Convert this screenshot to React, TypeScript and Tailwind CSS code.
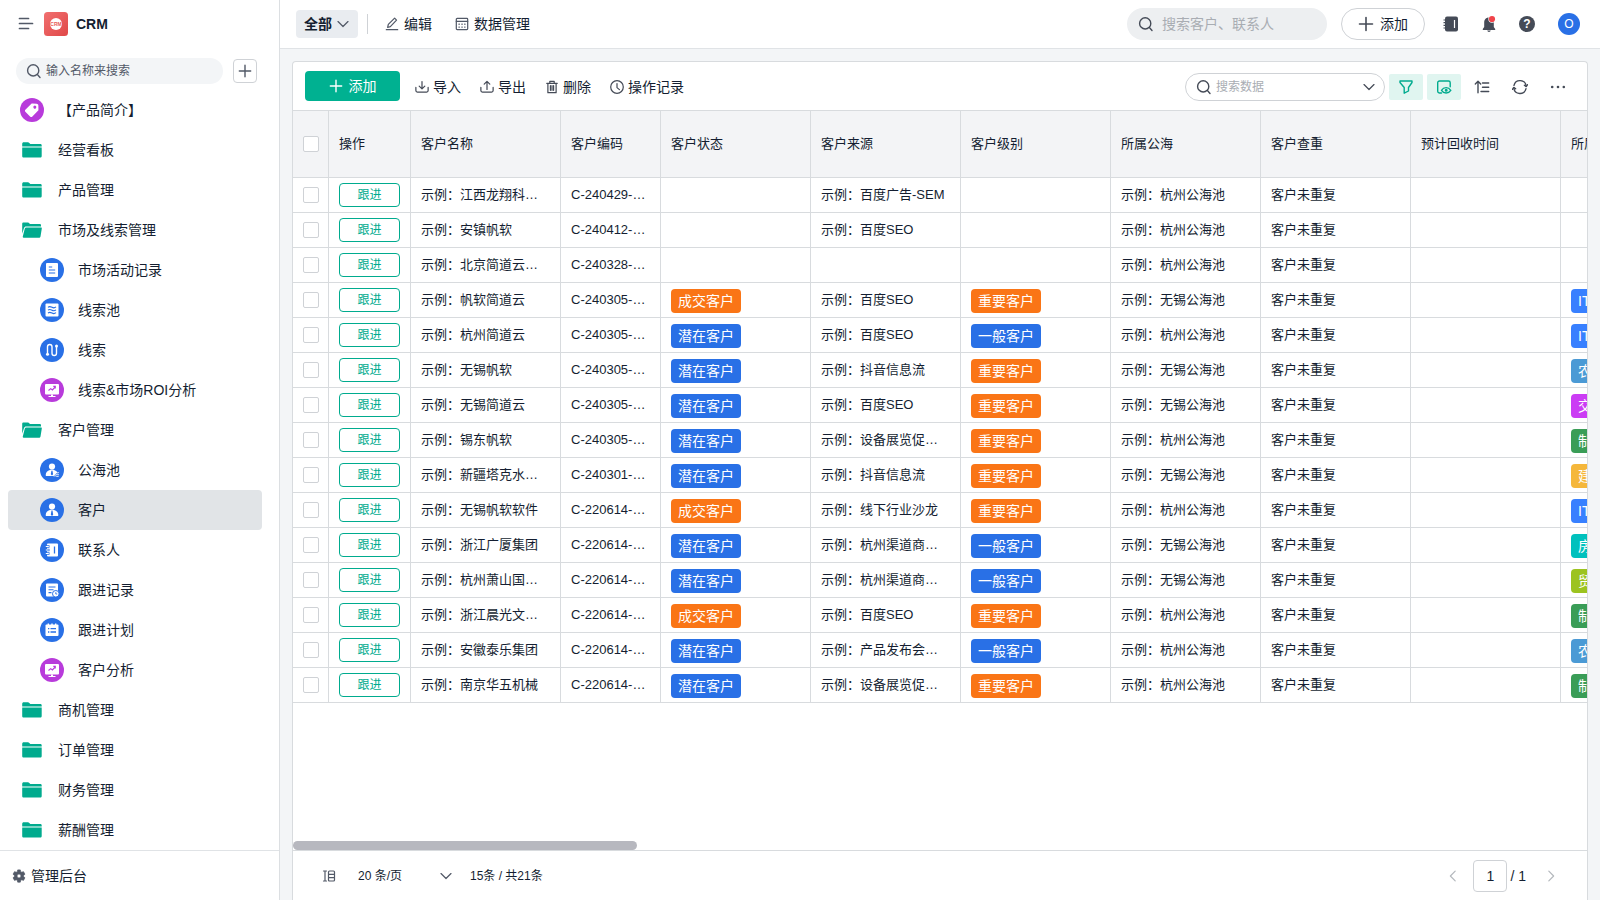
import React, { useState } from "react";

type IconProps = { className?: string; children: React.ReactNode };

const LineIcon: React.FC<IconProps> = ({ className = "size-4", children }) => (
  <svg
    viewBox="0 0 16 16"
    fill="none"
    stroke="currentColor"
    strokeWidth="1.4"
    strokeLinecap="round"
    strokeLinejoin="round"
    aria-hidden="true"
    className={`shrink-0 ${className}`}
  >
    {children}
  </svg>
);

const SearchIcon = ({ className }: { className?: string }) => (
  <LineIcon className={className}>
    <circle cx="7.2" cy="7.4" r="5.6" />
    <path d="M11.4 11.6l2.6 2.8" />
  </LineIcon>
);

const PlusIcon = ({ className }: { className?: string }) => (
  <LineIcon className={className}>
    <path d="M8 1.5v13M1.5 8h13" strokeWidth="1.6" />
  </LineIcon>
);

const ChevronDown = ({ className }: { className?: string }) => (
  <LineIcon className={className}>
    <path d="M2.3 5.2L8 10.9l5.7-5.7" />
  </LineIcon>
);

const FolderIcon = () => (
  <svg viewBox="0 0 24 24" fill="#00ab8e" className="size-6 shrink-0" aria-hidden="true">
    <path d="M2.2 5.9c0-1 .6-1.6 1.5-1.6h4.2c.6 0 1 .2 1.4.6l1 1h9.8c.9 0 1.6.5 1.6 1.4v1.1H2.200z" />
    <path d="M2.2 9.6h19.500v8.400c0 1-.6 1.600-1.600 1.600H3.800c-1 0-1.600-.6-1.600-1.600z" />
  </svg>
);

const FolderOpenIcon = () => (
  <svg viewBox="0 0 24 24" fill="#00ab8e" className="size-6 shrink-0" aria-hidden="true">
    <path d="M2.2 15.8V6c0-.9.500-1.400 1.400-1.400H8c.5 0 .9.200 1.200.6l.8.9h9.600c.9 0 1.400.5 1.400 1.300v1H6.100c-1 0-1.800.6-2.100 1.500z" />
    <path d="M6.200 9.400h14.700c.7 0 1.100.4.9 1.100l-1.300 7.900c-.2.900-.7 1.300-1.600 1.300H3.600c-.7 0-1-.4-.8-1.100l2-8c.2-.8.700-1.200 1.400-1.200z" />
  </svg>
);

const glyphs: Record<string, React.ReactNode> = {
  tag: (
    <g transform="rotate(45 12 12)">
      <path
        d="M12 3.8c.5 0 .9.2 1.3.5l3 2.9c.4.4.5.7.5 1.2v8.2c0 .8-.5 1.3-1.3 1.3h-7c-.8 0-1.3-.5-1.3-1.3V8.4c0-.5.1-.8.5-1.2l3-2.9c.4-.3.8-.5 1.3-.5z"
        fill="#fff"
      />
      <circle cx="12" cy="8" r="1.500" fill="#b83bdb" />
    </g>
  ),
  doc: (
    <>
      <rect x="6" y="5" width="12" height="14" rx="1" fill="#fff" />
      <path d="M8.8 9h3.4M8.8 12h6.4M8.8 15h6.4" stroke="#2970e6" strokeWidth="1.2" />
    </>
  ),
  pool: (
    <>
      <rect x="5.500" y="5.500" width="13" height="13" rx="1" fill="#fff" />
      <path
        d="M8 9.3c1.5-1.4 2.6-.8 4 0s2.500 1 4-.4M8 12.200c1.500-1.400 2.600-.8 4 0s2.500 1 4-.4M8 15.100c1.500-1.400 2.600-.8 4 0s2.500 1 4-.4"
        fill="none"
        stroke="#2970e6"
        strokeWidth="1.1"
      />
    </>
  ),
  clue: (
    <>
      <path
        d="M7.500 15.500V8.700a2.250 2.250 0 0 1 4.500 0v6.600a2.250 2.250 0 0 0 4.500 0V8.500"
        fill="none"
        stroke="#fff"
        strokeWidth="1.4"
      />
      <circle cx="7.500" cy="16.300" r="1.500" fill="#fff" />
      <circle cx="16.500" cy="8" r="1.500" fill="#fff" />
    </>
  ),
  chart: (
    <>
      <rect x="5" y="6" width="14" height="10.5" rx="1" fill="#fff" />
      <path d="M11 16.500h2v1.500h2.500V19h-7v-1H11z" fill="#fff" />
      <path d="M8.500 12.500l2.200-1.900 1.700 1.400 2.800-3M13.300 8.400h2v2" fill="none" stroke="#b83bdb" strokeWidth="1.1" />
    </>
  ),
  seaUser: (
    <>
      <circle cx="12" cy="8.500" r="3.100" fill="#fff" />
      <path d="M5.800 18v-1.500c0-2 1.200-3.500 3.400-4.300l2.800-.6 2.700.6c1.300.5 2.200 1.200 2.800 2.100L13.600 18z" fill="#fff" />
      <path d="M11.400 12.700h1.100l.6 3.600-1.100 1.200-1.200-1.200z" fill="#2970e6" />
      <path
        d="M13.800 14.600c1.200-.8 1.800-.4 2.600 0s1.500.5 2.400-.2M13.800 16.400c1.200-.8 1.800-.4 2.600 0s1.500.5 2.400-.2M13.800 18.200c1.200-.8 1.800-.4 2.600 0s1.500.5 2.400-.2"
        fill="none"
        stroke="#fff"
        strokeWidth="1"
      />
    </>
  ),
  user: (
    <>
      <circle cx="12" cy="8.500" r="3.100" fill="#fff" />
      <path d="M5.800 18v-1.500c0-2 1.200-3.500 3.400-4.300l2.800-.6 2.800.6c2.100.8 3.400 2.300 3.400 4.300V18z" fill="#fff" />
      <path d="M11.500 12.600h1l.7 4.200L12 18l-1.200-1.200z" fill="#2970e6" />
    </>
  ),
  contact: (
    <>
      <rect x="7" y="5.500" width="11" height="13" rx="1" fill="#fff" />
      <path d="M6 8.500h3.500M6 12h3.500M6 15.500h3.500" stroke="#2970e6" strokeWidth="2.4" />
      <path d="M5.800 8.500h3M5.800 12h3M5.800 15.500h3" stroke="#fff" strokeWidth="1" />
      <path d="M14.500 8.500v7" stroke="#2970e6" strokeWidth="1.3" />
    </>
  ),
  record: (
    <>
      <rect x="6" y="5.500" width="12" height="13" rx="1" fill="#fff" />
      <path d="M8.500 9h7M8.500 11.800h5M8.500 14.600h3" stroke="#2970e6" strokeWidth="1.1" />
      <circle cx="15.800" cy="15.800" r="3.300" fill="#fff" stroke="#2970e6" />
      <path d="M15.800 14.200v1.800h1.400" fill="none" stroke="#2970e6" strokeWidth=".9" />
    </>
  ),
  plan: (
    <>
      <rect x="5.500" y="6.500" width="13" height="11.500" rx="1" fill="#fff" />
      <path d="M8.300 5.500v2M12 5.500v2M15.700 5.500v2" stroke="#fff" strokeWidth="1.4" />
      <path d="M10.500 10.700H16M10.500 14H16M8 10.700h1.300M8 14h1.300" stroke="#2970e6" strokeWidth="1.3" />
    </>
  ),
};

type MenuItem = { label: string; kind: string; color?: "blue" | "purple"; child?: boolean };

const menu: MenuItem[] = [
  { label: "【产品简介】", kind: "tag", color: "purple" },
  { label: "经营看板", kind: "folder" },
  { label: "产品管理", kind: "folder" },
  { label: "市场及线索管理", kind: "open" },
  { label: "市场活动记录", kind: "doc", color: "blue", child: true },
  { label: "线索池", kind: "pool", color: "blue", child: true },
  { label: "线索", kind: "clue", color: "blue", child: true },
  { label: "线索&市场ROI分析", kind: "chart", color: "purple", child: true },
  { label: "客户管理", kind: "open" },
  { label: "公海池", kind: "seaUser", color: "blue", child: true },
  { label: "客户", kind: "user", color: "blue", child: true },
  { label: "联系人", kind: "contact", color: "blue", child: true },
  { label: "跟进记录", kind: "record", color: "blue", child: true },
  { label: "跟进计划", kind: "plan", color: "blue", child: true },
  { label: "客户分析", kind: "chart", color: "purple", child: true },
  { label: "商机管理", kind: "folder" },
  { label: "订单管理", kind: "folder" },
  { label: "财务管理", kind: "folder" },
  { label: "薪酬管理", kind: "folder" },
];

const MenuIcon = ({ item }: { item: MenuItem }) => {
  if (item.kind === "folder") return <FolderIcon />;
  if (item.kind === "open") return <FolderOpenIcon />;
  return (
    <svg
      viewBox="0 0 24 24"
      aria-hidden="true"
      className={`size-6 shrink-0 rounded-full ${item.color === "purple" ? "bg-[#b83bdb]" : "bg-[#2970e6]"}`}
    >
      {glyphs[item.kind]}
    </svg>
  );
};

const columns = [
  { title: "操作", width: 82 },
  { title: "客户名称", width: 150 },
  { title: "客户编码", width: 100 },
  { title: "客户状态", width: 150 },
  { title: "客户来源", width: 150 },
  { title: "客户级别", width: 150 },
  { title: "所属公海", width: 150 },
  { title: "客户查重", width: 150 },
  { title: "预计回收时间", width: 150 },
  { title: "所属行业", width: 150 },
];

// name, code, status, source, level, pool city, industry
const rows: string[][] = [
  ["江西龙翔科…", "C-240429-…", "", "百度广告-SEM", "", "杭州", ""],
  ["安镇帆软", "C-240412-…", "", "百度SEO", "", "杭州", ""],
  ["北京简道云…", "C-240328-…", "", "", "", "杭州", ""],
  ["帆软简道云", "C-240305-…", "成交客户", "百度SEO", "重要客户", "无锡", "IT"],
  ["杭州简道云", "C-240305-…", "潜在客户", "百度SEO", "一般客户", "杭州", "IT"],
  ["无锡帆软", "C-240305-…", "潜在客户", "抖音信息流", "重要客户", "无锡", "农业"],
  ["无锡简道云", "C-240305-…", "潜在客户", "百度SEO", "重要客户", "无锡", "交通"],
  ["锡东帆软", "C-240305-…", "潜在客户", "设备展览促…", "重要客户", "杭州", "制造"],
  ["新疆塔克水…", "C-240301-…", "潜在客户", "抖音信息流", "重要客户", "无锡", "建筑"],
  ["无锡帆软软件", "C-220614-…", "成交客户", "线下行业沙龙", "重要客户", "杭州", "IT"],
  ["浙江广厦集团", "C-220614-…", "潜在客户", "杭州渠道商…", "一般客户", "无锡", "房产"],
  ["杭州萧山国…", "C-220614-…", "潜在客户", "杭州渠道商…", "一般客户", "无锡", "贸易"],
  ["浙江晨光文…", "C-220614-…", "成交客户", "百度SEO", "重要客户", "杭州", "制造"],
  ["安徽泰乐集团", "C-220614-…", "潜在客户", "产品发布会…", "一般客户", "杭州", "农业"],
  ["南京华五机械", "C-220614-…", "潜在客户", "设备展览促…", "重要客户", "杭州", "制造"],
];

const tagColors: Record<string, string> = {
  成交客户: "bg-[#fa7516]",
  重要客户: "bg-[#fa7516]",
  潜在客户: "bg-[#2970e6]",
  一般客户: "bg-[#2970e6]",
  IT: "bg-[#3880ff]",
  农业: "bg-[#4b9ad5]",
  交通: "bg-[#cb3cf4]",
  制造: "bg-[#3a9d57]",
  建筑: "bg-[#f5b73b]",
  房产: "bg-[#00c1bd]",
  贸易: "bg-[#9cc31f]",
};

const cell = "h-[35px] border-r border-b border-[#d8dbde] px-2.5 whitespace-nowrap";

const TextCell = ({ children }: { children?: React.ReactNode }) => (
  <td className={`${cell} overflow-hidden`}>{children}</td>
);

const TagCell = ({ value }: { value: string }) => (
  <td className={`${cell} pt-1.5 align-top`}>
    {value && (
      <span className={`block w-fit rounded px-[7px] text-sm leading-6 text-white ${tagColors[value]}`}>{value}</span>
    )}
  </td>
);

const Checkbox = ({ label }: { label: string }) => (
  <input
    type="checkbox"
    aria-label={label}
    className="block size-4 appearance-none rounded-xs border border-[#cfd2d6] bg-white checked:bg-[#00ab8e]"
  />
);

const Sidebar = () => {
  const [active, setActive] = useState("客户");

  return (
    <aside className="flex w-70 shrink-0 flex-col border-r border-[#dcdfe2] bg-white">
      <div className="flex h-12 shrink-0 items-center pl-[18px]">
        <button aria-label="收起菜单" className="text-[#525967]">
          <svg viewBox="0 0 16 16" stroke="currentColor" strokeWidth="1.7" strokeLinecap="round" className="size-4">
            <path d="M1.500 2.500h9M1.500 7.500h13M1.500 12.500h9" />
          </svg>
        </button>
        <svg viewBox="0 0 24 24" className="mr-2 ml-2.5 size-6" aria-hidden="true">
          <defs>
            <linearGradient id="logo" x1="0" y1="0" x2="1" y2="1">
              <stop offset="0" stopColor="#f17070" />
              <stop offset="1" stopColor="#e04848" />
            </linearGradient>
          </defs>
          <rect width="24" height="24" rx="3.500" fill="url(#logo)" />
          <circle cx="12" cy="12" r="6" fill="#fff" />
          <text x="12" y="13.800" textAnchor="middle" fontSize="5" fontWeight="bold" fill="#e85a5a">
            CRM
          </text>
        </svg>
        <h1 className="text-sm font-bold">CRM</h1>
      </div>

      <div className="flex h-[42px] shrink-0 items-center justify-between pt-1 pr-[22px] pl-4">
        <label className="flex h-[26px] w-[207px] items-center gap-1 rounded-full bg-[#f3f5f7] pl-2.5 text-[#525967]">
          <SearchIcon />
          <input
            aria-label="搜索菜单"
            placeholder="输入名称来搜索"
            className="w-40 bg-transparent text-xs outline-none placeholder:text-[#525967]"
          />
        </label>
        <button
          aria-label="新建"
          className="flex size-6 items-center justify-center rounded border border-[#cfd2d6] text-[#525967]"
        >
          <PlusIcon className="size-3.5" />
        </button>
      </div>

      <nav className="min-h-0 flex-1 overflow-hidden pr-[17px] pl-2">
        {menu.map((item) => (
          <a
            key={item.label}
            href="#"
            onClick={() => setActive(item.label)}
            className={`flex h-10 items-center gap-3.5 rounded text-sm ${item.child ? "pl-8" : "pl-3"} ${
              active === item.label ? "bg-[#e1e4e7]" : ""
            }`}
          >
            <MenuIcon item={item} />
            {item.label}
          </a>
        ))}
      </nav>

      <button className="flex h-[50px] shrink-0 items-center gap-[5px] border-t border-[#e0e3e6] pl-3 text-sm">
        <svg viewBox="0 0 16 16" className="size-3.5" aria-hidden="true">
          <path
            d="M6.500 1h3l.4 2 1.300.7 1.900-.7 1.700 2.900-1.500 1.300v1.600l1.500 1.300-1.700 2.900-1.900-.7-1.300.7-.4 2h-3l-.4-2-1.300-.7-1.900.7-1.700-2.900 1.500-1.300V7.200L1.200 5.900 2.900 3l1.900.7L6.100 3zM8 5.700a2.300 2.300 0 1 0 0 4.600 2.300 2.300 0 0 0 0-4.600z"
            fill="#525967"
            stroke="#525967"
            strokeWidth=".8"
            strokeLinejoin="round"
            fillRule="evenodd"
          />
        </svg>
        管理后台
      </button>
    </aside>
  );
};

const TopBar = () => (
  <header className="flex h-[49px] shrink-0 items-center border-b border-[#e0e3e6] bg-white pr-5 pl-4 text-sm">
    <button className="flex h-7 items-center gap-1 rounded bg-[#e9ecf0] px-2 font-bold">
      全部
      <ChevronDown className="size-3.5 text-[#525967]" />
    </button>
    <span className="mx-[9px] h-5 w-px bg-[#cfd2d6]" />
    <button className="ml-2 flex items-center gap-[5px]">
      <LineIcon className="size-3.5 text-[#525967]">
        <path d="M1.500 14.500h13M3 11.800l.8-3.300L11 1.300l2.200 2.200L6.100 11z" />
      </LineIcon>
      编辑
    </button>
    <button className="ml-[23px] flex items-center gap-[5px]">
      <LineIcon className="size-3.5 text-[#525967]">
        <rect x="1.500" y="1.500" width="13" height="13" rx="1" />
        <path d="M1.500 5h13M4.500 8.200h.5M7.800 8.200h.5M11 8.200h.5M4.500 11.500h.5M7.800 11.500h.5M11 11.500h.5" />
      </LineIcon>
      数据管理
    </button>

    <label className="mr-3.5 ml-auto flex h-8 w-50 items-center gap-2 rounded-full bg-[#edeff1] pl-[11px] text-[#454b57]">
      <SearchIcon />
      <input
        aria-label="全局搜索"
        placeholder="搜索客户、联系人"
        className="w-36 bg-transparent outline-none placeholder:text-[#a9adb3]"
      />
    </label>
    <button className="flex h-8 items-center gap-1.5 rounded-full border border-[#cfd2d6] px-4">
      <PlusIcon className="size-4 text-[#454b57]" />
      添加
    </button>
    <button aria-label="通讯录" className="ml-[17px] text-[#454b57]">
      <svg viewBox="0 0 18 18" className="size-[18px]">
        <rect x="3" y="1.500" width="13" height="15" rx="2" fill="currentColor" />
        <path d="M1.500 5H4M1.500 7.700H4M1.500 10.400H4M1.500 13H4" stroke="currentColor" strokeWidth="1.2" />
        <path d="M12.500 5v8" stroke="#fff" strokeWidth="1.2" />
      </svg>
    </button>
    <button aria-label="通知" className="ml-5 text-[#454b57]">
      <svg viewBox="0 0 18 18" className="size-[18px]">
        <path
          d="M9 2.500c3.200 0 4.800 2.200 4.800 5v4.600l1.400 2v.9H2.800v-.9l1.400-2V7.500c0-2.800 1.600-5 4.800-5zM7.200 15.500h3.600c-.2.900-.9 1.400-1.800 1.400s-1.600-.5-1.800-1.400z"
          fill="currentColor"
        />
        <circle cx="12" cy="4" r="3.700" fill="#fff" />
        <circle cx="12" cy="4" r="3.100" fill="#f0444a" />
      </svg>
    </button>
    <button aria-label="帮助" className="ml-5 flex size-[18px] items-center justify-center">
      <span className="flex size-4 items-center justify-center rounded-full bg-[#454b57] text-xs leading-4 font-bold text-white">
        ?
      </span>
    </button>
    <button className="ml-[22px] flex size-[22px] items-center justify-center rounded-full bg-[#2970e6] text-xs text-white">
      O
    </button>
  </header>
);

const Toolbar = () => (
  <div className="flex h-[49px] shrink-0 items-center border-b border-[#d8dbde] px-3 text-sm">
    <button className="flex h-[30px] w-[95px] items-center justify-center gap-1.5 rounded bg-[#00b191] text-white">
      <PlusIcon className="size-3.5" />
      添加
    </button>
    <div className="ml-[15px] flex items-center gap-[19px] pt-0.5">
      <button className="flex items-center gap-1">
        <LineIcon className="size-3.5 text-[#454b57]">
          <path d="M8 1.800v8M4.800 7L8 10.100 11.200 7M1 8.500v3.600c0 1 .6 1.700 1.700 1.700h10.600c1.100 0 1.700-.7 1.700-1.700V8.500" />
        </LineIcon>
        导入
      </button>
      <button className="flex items-center gap-1">
        <LineIcon className="size-3.5 text-[#454b57]">
          <path d="M8 10.800V1.600M4.800 4.700L8 1.500l3.200 3.200M1 8.500v3.600c0 1 .6 1.700 1.700 1.700h10.600c1.100 0 1.700-.7 1.700-1.700V8.500" />
        </LineIcon>
        导出
      </button>
      <button className="flex items-center gap-1">
        <LineIcon className="size-3.5 text-[#454b57]">
          <path d="M2 3.800h12M5.500 3.500V1.500h5v2M3.300 4v10.500h9.400V4M6.200 6.500v5.300M8 6.500v5.300M9.800 6.500v5.300" />
        </LineIcon>
        删除
      </button>
      <button className="flex items-center gap-1">
        <LineIcon className="size-3.5 text-[#454b57]">
          <circle cx="8" cy="8" r="7.200" />
          <path d="M8 4v4.700l2.800 2.300" />
        </LineIcon>
        操作记录
      </button>
    </div>

    <div className="ml-auto flex items-center gap-1 pt-0.5 text-[#454b57]">
      <label className="flex h-7 w-50 items-center gap-1 rounded-full border border-[#cfd2d6] pr-2 pl-2.5">
        <SearchIcon />
        <input
          aria-label="搜索数据"
          placeholder="搜索数据"
          className="min-w-0 flex-1 bg-transparent text-xs outline-none placeholder:text-[#a9adb3]"
        />
        <ChevronDown className="size-3.5" />
      </label>
      <button
        aria-label="筛选"
        className="flex h-[26px] w-[34px] items-center justify-center rounded-xs bg-[#e0f5f0] text-[#00ab8e]"
      >
        <LineIcon>
          <path d="M2 2h12v1.500l-3.500 5V12l-4.300 2.200V8.500L2 3.500z" />
        </LineIcon>
      </button>
      <button
        aria-label="显示字段"
        className="flex h-[26px] w-[34px] items-center justify-center rounded-xs bg-[#e0f5f0] text-[#00ab8e]"
      >
        <LineIcon>
          <path d="M5.500 14h-2c-1 0-1.800-.7-1.800-1.700V3.700C1.700 2.700 2.500 2 3.500 2h9c1 0 1.700.7 1.700 1.700v4" />
          <path d="M5.500 11.300c2.300-3.600 6.900-3.600 9.300 0-2.400 3.600-7 3.600-9.300 0z" />
          <circle cx="10.200" cy="11.200" r=".8" />
        </LineIcon>
      </button>
      <button aria-label="排序" className="flex h-[26px] w-[34px] items-center justify-center">
        <LineIcon>
          <path d="M4 13.800V2.500M1.300 5L4 2.300 6.700 5M8.500 4h6.200M8.500 8.200h6.200M7 12.500h7.700" />
        </LineIcon>
      </button>
      <button aria-label="刷新" className="flex h-[26px] w-[34px] items-center justify-center">
        <LineIcon>
          <path d="M2 6.400a6.200 6.200 0 0 1 12.200.7M14 9.600A6.200 6.200 0 0 1 1.800 9" />
          <path d="M12.400 6.200l1.800 1.400 1.300-1.900M.5 10.300l1.300-1.900 1.800 1.400" />
        </LineIcon>
      </button>
      <button aria-label="更多" className="flex h-[26px] w-[34px] items-center justify-center">
        <svg viewBox="0 0 16 16" fill="currentColor" className="size-4">
          <circle cx="2.200" cy="8" r="1.300" />
          <circle cx="8" cy="8" r="1.300" />
          <circle cx="13.800" cy="8" r="1.300" />
        </svg>
      </button>
    </div>
  </div>
);

const CustomerTable = () => (
  <div className="flex min-h-0 flex-1 flex-col justify-between overflow-hidden">
    <table className="w-max table-fixed border-separate border-spacing-0 text-left text-[13px]">
      <colgroup>
        <col style={{ width: 36 }} />
        {columns.map((c) => (
          <col key={c.title} style={{ width: c.width }} />
        ))}
      </colgroup>
      <thead>
        <tr className="bg-[#f3f4f6]">
          <th className="h-[67px] border-r border-b border-[#d8dbde] pl-2.5">
            <Checkbox label="全选" />
          </th>
          {columns.map((c) => (
            <th key={c.title} className="border-r border-b border-[#d8dbde] px-2.5 font-normal">
              {c.title}
            </th>
          ))}
        </tr>
      </thead>
      <tbody>
        {rows.map(([name, code, status, source, level, pool, industry]) => (
          <tr key={name}>
            <td className="border-r border-b border-[#d8dbde] pl-2.5">
              <Checkbox label={name} />
            </td>
            <td className={cell}>
              <button className="block h-6 w-full rounded border border-[#00ab8e] text-xs text-[#00ab8e]">跟进</button>
            </td>
            <TextCell>示例：{name}</TextCell>
            <TextCell>{code}</TextCell>
            <TagCell value={status} />
            <TextCell>{source && `示例：${source}`}</TextCell>
            <TagCell value={level} />
            <TextCell>示例：{pool}公海池</TextCell>
            <TextCell>客户未重复</TextCell>
            <TextCell />
            <TagCell value={industry} />
          </tr>
        ))}
      </tbody>
    </table>
    <div className="h-[9px] w-[344px] shrink-0 rounded-full bg-[#b7b8bf]" />
  </div>
);

const Pager = () => (
  <footer className="flex h-[50px] shrink-0 items-center border-t border-[#d8dbde] pr-[29px] pl-7 text-xs">
    <button aria-label="行高" className="text-[#525967]">
      <LineIcon className="size-4">
        <path
          d="M2.500 3h3M2.500 13h3M4 3v10M8.500 3h4c.6 0 1 .4 1 1v8c0 .6-.4 1-1 1h-4c-.6 0-1-.4-1-1V4c0-.6.4-1 1-1zM7.500 6.300h6M7.500 9.700h6"
          strokeWidth="1.2"
        />
      </LineIcon>
    </button>
    <label className="relative ml-[21px] flex w-[95px] items-center">
      <select aria-label="每页条数" className="w-full appearance-none bg-transparent text-xs outline-none">
        <option>20 条/页</option>
        <option>50 条/页</option>
        <option>100 条/页</option>
      </select>
      <ChevronDown className="pointer-events-none absolute right-0 size-3.5 text-[#525967]" />
    </label>
    <span className="ml-[17px]">15条 / 共21条</span>
    <div className="ml-auto flex items-center text-sm">
      <button aria-label="上一页" className="text-[#b4b8bd]">
        <LineIcon className="size-3.5">
          <path d="M10.500 2.500L5 8l5.500 5.500" />
        </LineIcon>
      </button>
      <input
        aria-label="页码"
        defaultValue="1"
        className="mr-[3px] ml-[13px] h-8 w-[34px] rounded border border-[#cfd2d6] text-center outline-none"
      />
      <span>/ 1</span>
      <button aria-label="下一页" className="ml-[18px] text-[#b4b8bd]">
        <LineIcon className="size-3.5">
          <path d="M5.500 2.500L11 8l-5.500 5.500" />
        </LineIcon>
      </button>
    </div>
  </footer>
);

const App: React.FC = () => {
  return (
    <div className="flex h-screen overflow-hidden bg-[#f3f5f7] font-['Liberation_Sans','Noto_Sans_CJK_SC',sans-serif] text-[#141e31]">
      <Sidebar />
      <main className="flex min-w-0 flex-1 flex-col">
        <TopBar />
        <section className="mx-3 mt-3 flex min-h-0 flex-1 flex-col overflow-hidden rounded-t border border-b-0 border-[#d8dbde] bg-white">
          <Toolbar />
          <CustomerTable />
          <Pager />
        </section>
      </main>
    </div>
  );
};

export default App;
